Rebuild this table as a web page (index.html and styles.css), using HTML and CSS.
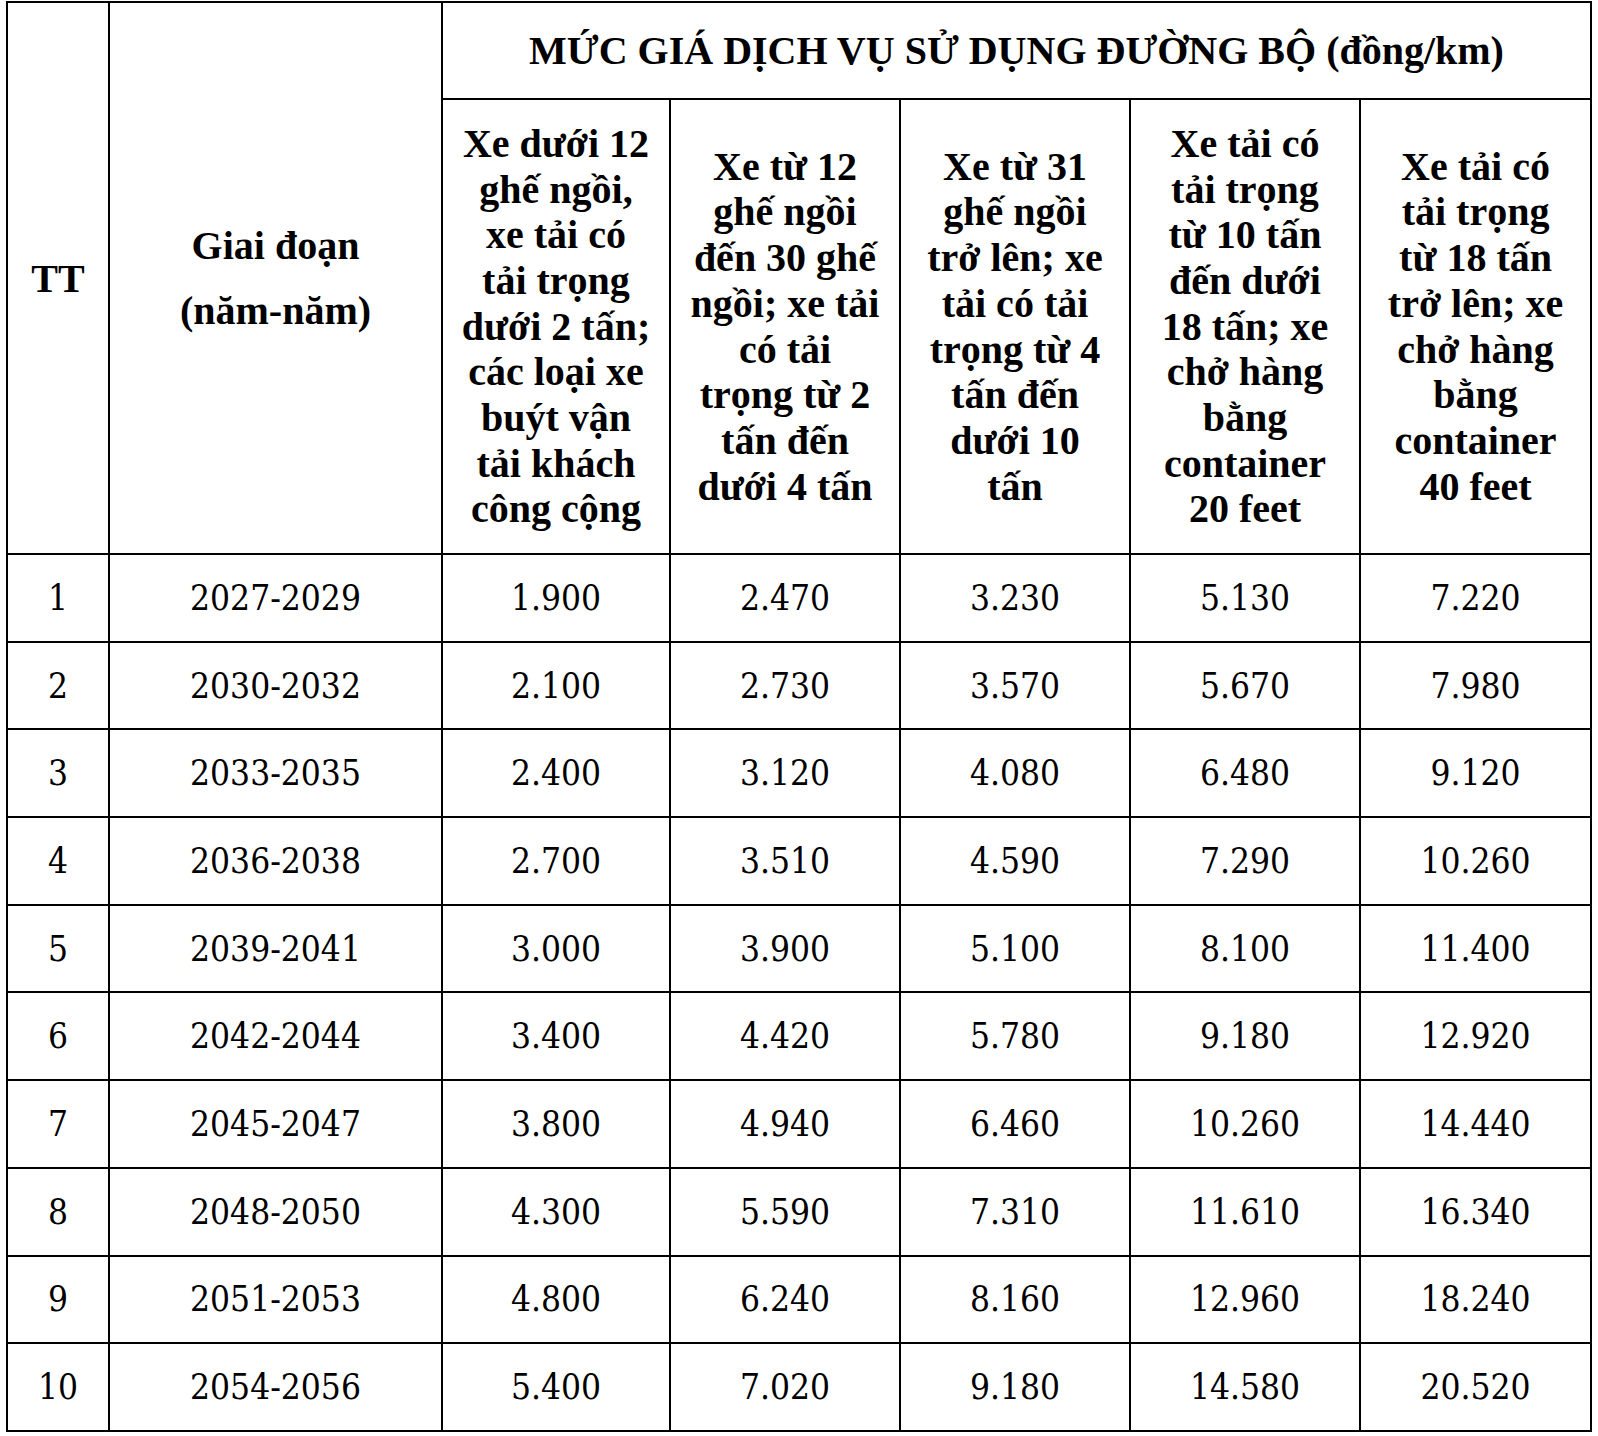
FILE: index.html
```html
<!DOCTYPE html>
<html lang="vi">
<head>
<meta charset="utf-8">
<title>Mức giá dịch vụ sử dụng đường bộ</title>
<link rel="stylesheet" href="styles.css">
</head>
<body>
<table class="price-table">
  <colgroup>
    <col class="c-tt">
    <col class="c-period">
    <col class="c-v1">
    <col class="c-v2">
    <col class="c-v3">
    <col class="c-v4">
    <col class="c-v5">
  </colgroup>
  <thead>
    <tr class="row-title">
      <th class="h-side" rowspan="2">TT</th>
      <th class="h-side" rowspan="2"><span class="line">Giai đoạn</span><span class="line">(năm-năm)</span></th>
      <th class="h-title" colspan="5">MỨC GIÁ DỊCH VỤ SỬ DỤNG ĐƯỜNG BỘ (đồng/km)</th>
    </tr>
    <tr class="row-cats">
      <th class="h-cat">Xe dưới 12<br>ghế ngồi,<br>xe tải có<br>tải trọng<br>dưới 2 tấn;<br>các loại xe<br>buýt vận<br>tải khách<br>công cộng</th>
      <th class="h-cat">Xe từ 12<br>ghế ngồi<br>đến 30 ghế<br>ngồi; xe tải<br>có tải<br>trọng từ 2<br>tấn đến<br>dưới 4 tấn</th>
      <th class="h-cat">Xe từ 31<br>ghế ngồi<br>trở lên; xe<br>tải có tải<br>trọng từ 4<br>tấn đến<br>dưới 10<br>tấn</th>
      <th class="h-cat">Xe tải có<br>tải trọng<br>từ 10 tấn<br>đến dưới<br>18 tấn; xe<br>chở hàng<br>bằng<br>container<br>20 feet</th>
      <th class="h-cat">Xe tải có<br>tải trọng<br>từ 18 tấn<br>trở lên; xe<br>chở hàng<br>bằng<br>container<br>40 feet</th>
    </tr>
  </thead>
  <tbody>
    <tr><td>1</td><td>2027-2029</td><td>1.900</td><td>2.470</td><td>3.230</td><td>5.130</td><td>7.220</td></tr>
    <tr><td>2</td><td>2030-2032</td><td>2.100</td><td>2.730</td><td>3.570</td><td>5.670</td><td>7.980</td></tr>
    <tr><td>3</td><td>2033-2035</td><td>2.400</td><td>3.120</td><td>4.080</td><td>6.480</td><td>9.120</td></tr>
    <tr><td>4</td><td>2036-2038</td><td>2.700</td><td>3.510</td><td>4.590</td><td>7.290</td><td>10.260</td></tr>
    <tr><td>5</td><td>2039-2041</td><td>3.000</td><td>3.900</td><td>5.100</td><td>8.100</td><td>11.400</td></tr>
    <tr><td>6</td><td>2042-2044</td><td>3.400</td><td>4.420</td><td>5.780</td><td>9.180</td><td>12.920</td></tr>
    <tr><td>7</td><td>2045-2047</td><td>3.800</td><td>4.940</td><td>6.460</td><td>10.260</td><td>14.440</td></tr>
    <tr><td>8</td><td>2048-2050</td><td>4.300</td><td>5.590</td><td>7.310</td><td>11.610</td><td>16.340</td></tr>
    <tr><td>9</td><td>2051-2053</td><td>4.800</td><td>6.240</td><td>8.160</td><td>12.960</td><td>18.240</td></tr>
    <tr><td>10</td><td>2054-2056</td><td>5.400</td><td>7.020</td><td>9.180</td><td>14.580</td><td>20.520</td></tr>
  </tbody>
</table>
</body>
</html>
```
FILE: styles.css
```css
html, body {
  background: #ffffff;
}
body {
  margin: 0;
  padding: 1px 0 0 6px;
}
.price-table {
  border-collapse: collapse;
  table-layout: fixed;
  width: 1586px;
  color: #000;
}
.c-tt { width: 102px; }
.c-period { width: 333px; }
.c-v1 { width: 228px; }
.c-v2 { width: 230px; }
.c-v3 { width: 230px; }
.c-v4 { width: 230px; }
.c-v5 { width: 231px; }

.price-table th,
.price-table td {
  border: 2px solid #000;
  padding: 0;
  text-align: center;
  vertical-align: middle;
}
.price-table th {
  font-family: "Liberation Serif", "Times New Roman", serif;
  font-weight: 700;
  white-space: nowrap;
}
.row-title { height: 97px; }
.row-cats { height: 455px; }
.h-title {
  font-size: 40px;
}
.h-side {
  font-size: 40px;
}
.h-side .line {
  display: block;
  line-height: 65px;
}
.h-cat {
  font-size: 40px;
  line-height: 45.7px;
}
.price-table tbody tr {
  height: 87.7px;
}
.price-table td {
  font-family: "DejaVu Serif", serif;
  font-stretch: condensed;
  font-size: 35px;
  font-weight: 400;
}
```
